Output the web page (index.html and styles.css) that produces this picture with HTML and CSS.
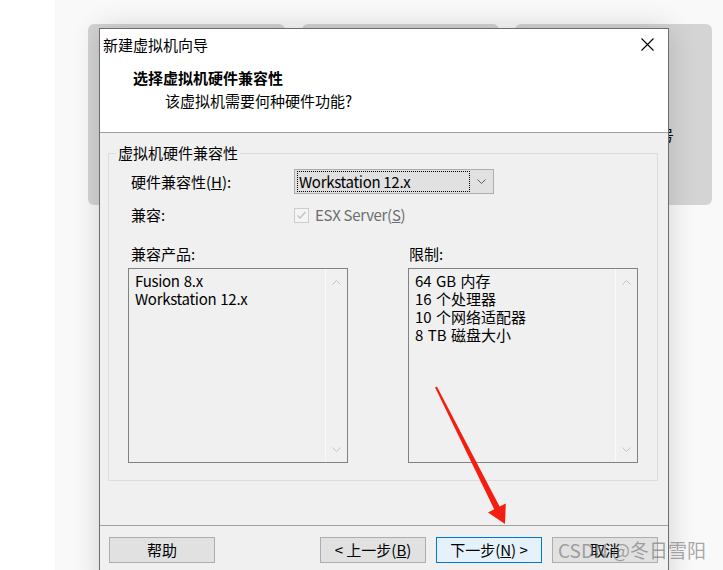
FILE: index.html
```html
<!DOCTYPE html>
<html lang="zh-CN">
<head>
    <meta charset="UTF-8">
    <meta name="viewport" content="width=device-width, initial-scale=1.0">
    <title>新建虚拟机向导</title>
    <link rel="stylesheet" href="styles.css">
</head>
<body>
    <div class="page">
        <div class="cards">
            <div class="card"></div>
            <div class="card"></div>
            <div class="card"><span class="peek">号</span></div>
        </div>
    </div>

    <div class="dialog">
        <div class="titlebar">
            <span>新建虚拟机向导</span>
            <svg class="close" width="13" height="13" viewBox="0 0 13 13">
                <path d="M0.5 0.5 L12.5 12.5 M12.5 0.5 L0.5 12.5" stroke="#000" stroke-width="1.1" fill="none"/>
            </svg>
        </div>
        <div class="header">
            <h1>选择虚拟机硬件兼容性</h1>
            <p>该虚拟机需要何种硬件功能?</p>
        </div>

        <div class="body">
            <fieldset class="group">
                <legend>虚拟机硬件兼容性</legend>
                <div class="group-body">
                    <div class="row">
                        <span class="label">硬件兼容性(<u>H</u>):</span>
                        <div class="combo">
                            <span class="combo-value latin">Workstation 12.x</span>
                            <span class="combo-arrow">
                                <svg width="9" height="5" viewBox="0 0 9 5"><polyline points="0.5,0.5 4.5,4.5 8.5,0.5" stroke="#606060" fill="none"/></svg>
                            </span>
                        </div>
                    </div>
                    <div class="row row-check">
                        <span class="label">兼容:</span>
                        <label class="check">
                            <span class="check-box">
                                <svg width="11" height="11" viewBox="0 0 11 11"><polyline points="1.5,5.5 4,8 9.5,2" stroke="#c2c2c2" stroke-width="1.3" fill="none"/></svg>
                            </span>
                            <span class="check-text latin">ESX Server(<u>S</u>)</span>
                        </label>
                    </div>

                    <div class="lists">
                        <div class="list-col list-products">
                            <div class="list-label">兼容产品:</div>
                            <div class="listbox">
                                <div class="items latin">
                                    <div>Fusion 8.x</div>
                                    <div>Workstation 12.x</div>
                                </div>
                                <div class="scroll">
                                    <svg width="9" height="5" viewBox="0 0 9 5"><polyline points="0.5,4.5 4.5,0.5 8.5,4.5" stroke="#c4c4c4" fill="none"/></svg>
                                    <svg width="9" height="5" viewBox="0 0 9 5"><polyline points="0.5,0.5 4.5,4.5 8.5,0.5" stroke="#c4c4c4" fill="none"/></svg>
                                </div>
                            </div>
                        </div>
                        <div class="list-col list-limits">
                            <div class="list-label">限制:</div>
                            <div class="listbox">
                                <div class="items">
                                    <div>64 GB 内存</div>
                                    <div>16 个处理器</div>
                                    <div>10 个网络适配器</div>
                                    <div>8 TB 磁盘大小</div>
                                </div>
                                <div class="scroll">
                                    <svg width="9" height="5" viewBox="0 0 9 5"><polyline points="0.5,4.5 4.5,0.5 8.5,4.5" stroke="#c4c4c4" fill="none"/></svg>
                                    <svg width="9" height="5" viewBox="0 0 9 5"><polyline points="0.5,0.5 4.5,4.5 8.5,0.5" stroke="#c4c4c4" fill="none"/></svg>
                                </div>
                            </div>
                        </div>
                    </div>
                </div>
            </fieldset>
        </div>

        <div class="footer">
            <button class="btn">帮助</button>
            <div class="footer-right">
                <button class="btn">&lt; 上一步(<u>B</u>)</button>
                <button class="btn btn-default">下一步(<u>N</u>) &gt;</button>
                <button class="btn">取消</button>
            </div>
        </div>
    </div>

    <!-- 红色箭头标注 -->
    <svg class="arrow" width="723" height="570" viewBox="0 0 723 570">
        <polygon points="436.9,386.6 499.6,506.6 505.8,503.4 505,524 488,512.4 494.2,509.3 435.1,387.4" fill="#f41e10"/>
    </svg>

    <div class="watermark">CSDN @冬日雪阳</div>
</body>
</html>
```

FILE: styles.css
```css
body {
    margin: 0;
    width: 723px;
    height: 570px;
    overflow: hidden;
    background: #fff;
    font-family: "Noto Sans CJK SC", "Noto Sans", sans-serif;
    font-size: 15px;
    color: #000;
}

/* 背景页面 */
.page {
    margin-left: 55px;
    height: 570px;
    background: #f9f9f9;
    padding: 24px 0 0 33px;
    box-sizing: border-box;
}
.cards {
    display: grid;
    grid-template-columns: repeat(3, 197px);
    column-gap: 16.5px;
}
.card {
    height: 181px;
    background: #d4d4d4;
    border-radius: 6px;
}
.peek {
    display: block;
    padding: 101px 0 0 144px;
    line-height: 20px;
}

/* 对话框 */
.dialog {
    position: absolute;
    left: 99px;
    top: 28px;
    width: 570px;
    height: 560px;
    box-sizing: border-box;
    border: 1px solid #6d6d6d;
    background: #f0f0f0;
    box-shadow: 0 0 26px rgba(0, 0, 0, 0.16);
    z-index: 2;
}
.titlebar {
    height: 30px;
    background: #fff;
    display: flex;
    justify-content: space-between;
    align-items: center;
    padding: 0 14px 0 3px;
}
.header {
    height: 74px;
    box-sizing: border-box;
    background: #fff;
    border-bottom: 1px solid #a0a0a0;
    padding: 9px 0 0 33px;
}
.header h1 {
    margin: 0;
    font-size: 15px;
    font-weight: bold;
    line-height: 20px;
}
.header p {
    margin: 3px 0 0 32px;
    line-height: 20px;
}

.body {
    padding: 10px 10px 0 8px;
}
.group {
    margin: 0;
    padding: 0;
    border: 1px solid #dcdcdc;
}
.group legend {
    margin-left: 7px;
    padding: 0 2px;
    line-height: 20px;
}
.group-body {
    padding: 6px 0 17px 19px;
}
.row {
    display: grid;
    grid-template-columns: 166px auto;
    align-items: center;
    line-height: 20px;
}
.label {
    padding-left: 3px;
}
.row-check {
    margin-top: 11px;
}

/* 纯英文文本略收紧 */
.latin {
    letter-spacing: -0.3px;
}

.combo {
    width: 200px;
    height: 25px;
    box-sizing: border-box;
    border: 1px solid #adadad;
    background: #e1e1e1;
    display: flex;
}
.combo-value {
    flex: 1;
    margin: 1px 0 1px 2px;
    border: 1px dotted #000;
    line-height: 19px;
    padding-left: 1px;
}
.combo-arrow {
    width: 23px;
    display: flex;
    align-items: center;
    justify-content: center;
}

.check {
    display: flex;
    align-items: center;
    color: #6d6d6d;
}
.check-box {
    width: 13px;
    height: 13px;
    border: 1px solid #cccccc;
    background: #f4f4f4;
    display: flex;
    align-items: center;
    justify-content: center;
}
.check-text {
    margin-left: 6px;
}

.lists {
    display: flex;
    gap: 60px;
    margin-top: 19px;
}
.list-label {
    line-height: 20px;
    margin-bottom: 4px;
}
.list-products .list-label {
    padding-left: 3px;
}
.list-limits .list-label {
    padding-left: 1px;
}
.list-products .listbox {
    width: 220px;
}
.list-limits .listbox {
    width: 230px;
}
.listbox {
    height: 195px;
    box-sizing: border-box;
    border: 1px solid #828282;
    background: #f0f0f0;
    display: flex;
}
.items {
    flex: 1;
    padding: 3px 0 0 6px;
    line-height: 18px;
    word-spacing: 1px;
}
.scroll {
    width: 21px;
    border-left: 1px solid #fafafa;
    display: flex;
    flex-direction: column;
    justify-content: space-between;
    align-items: center;
    padding: 11px 0 10px;
}

/* 底部按钮 */
.footer {
    margin-top: 44px;
    border-top: 1px solid #a0a0a0;
    padding: 11px 10px 0 9px;
    display: flex;
    justify-content: space-between;
}
.footer-right {
    display: flex;
    gap: 10px;
}
.btn {
    width: 106px;
    height: 26px;
    box-sizing: border-box;
    border: 1px solid #adadad;
    background: #e1e1e1;
    font-family: inherit;
    font-size: 15px;
    color: #000;
    padding: 0;
    line-height: 22px;
}
.btn-default {
    background: #e5f1fb;
    border-color: #0078d7;
}

.arrow {
    position: absolute;
    left: 0;
    top: 0;
    z-index: 3;
}
.watermark {
    position: absolute;
    left: 558px;
    top: 539px;
    font-size: 19px;
    line-height: 22px;
    color: rgba(110, 110, 110, 0.6);
    white-space: nowrap;
    z-index: 4;
}
```
